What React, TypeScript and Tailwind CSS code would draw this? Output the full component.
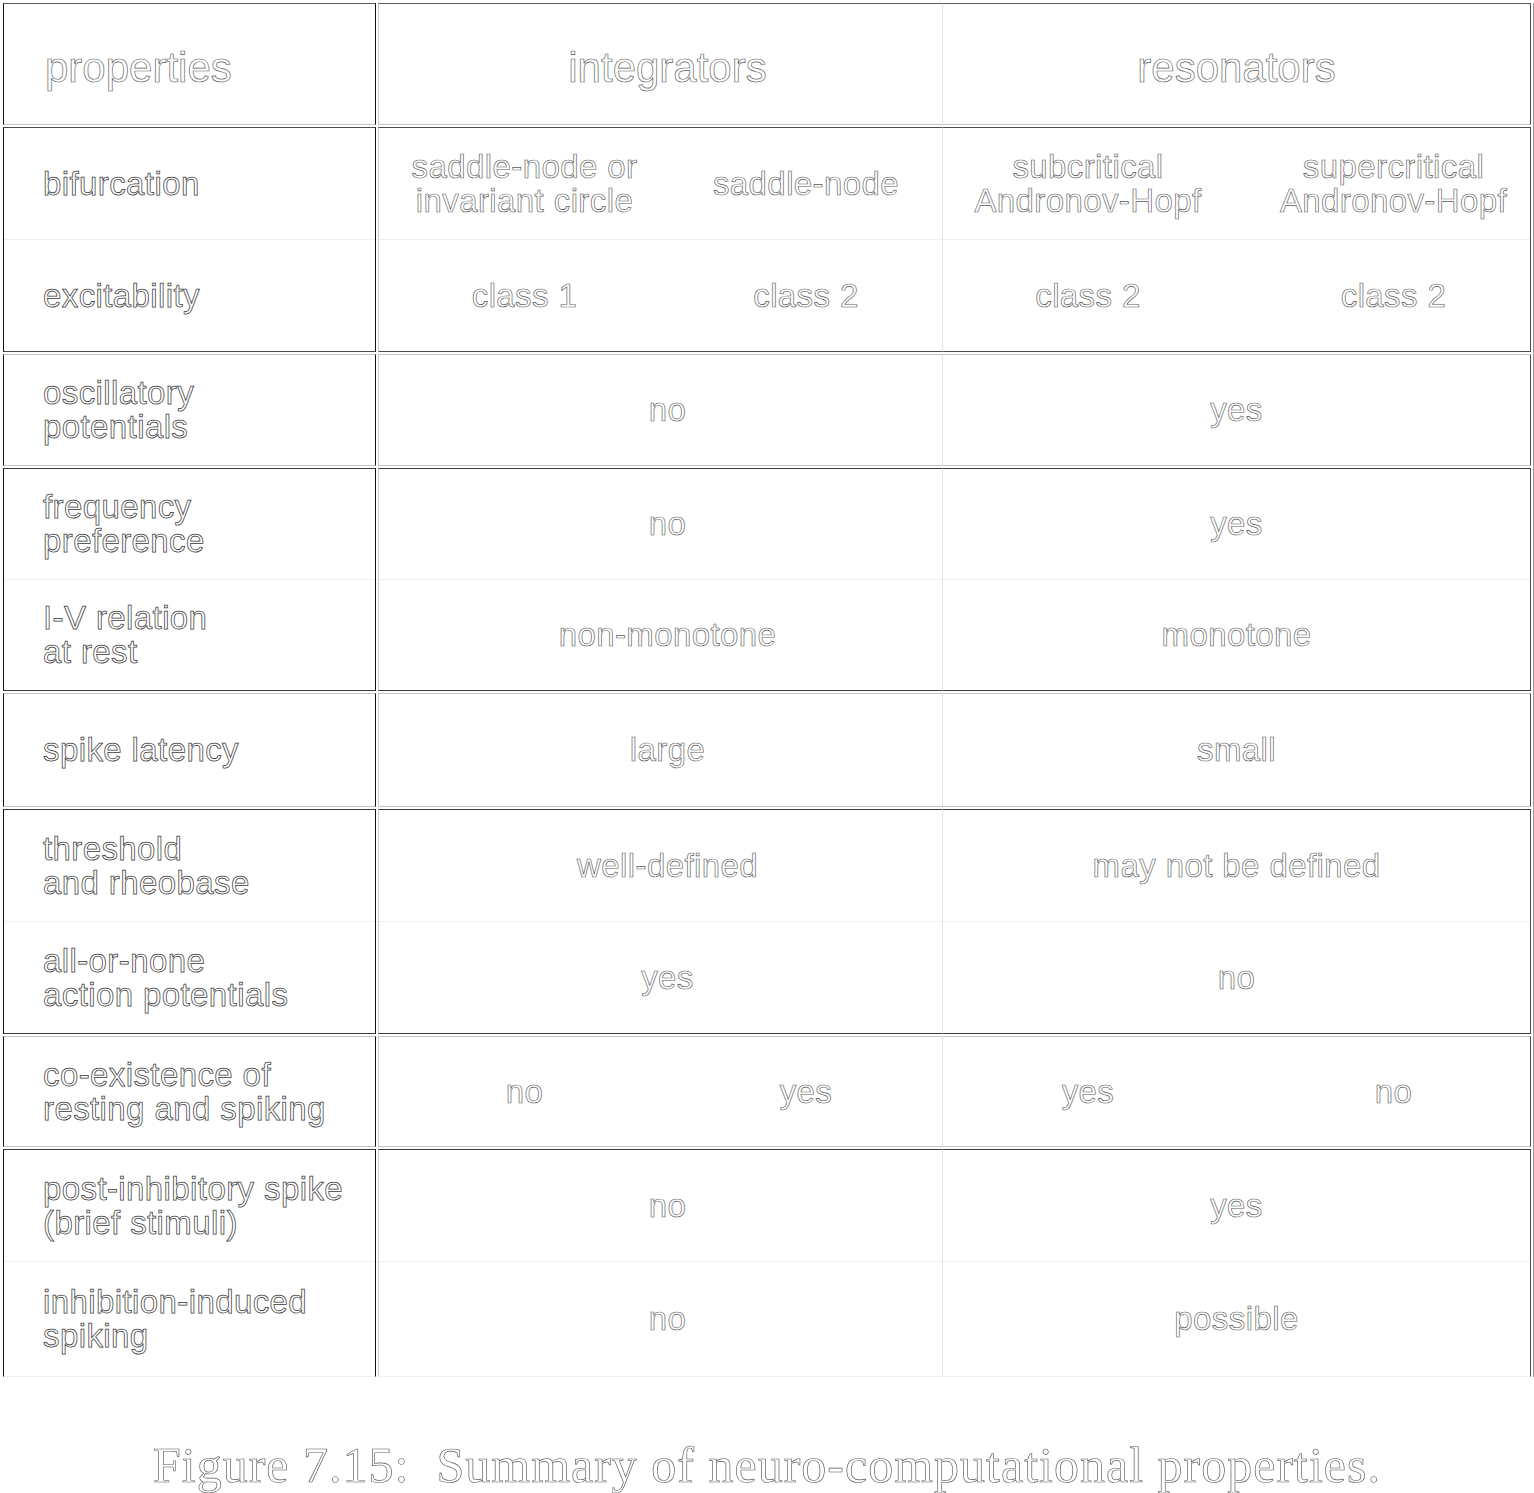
import React from "react";

const ink = "text-white [-webkit-text-stroke:0.75px_#3a3a3a]";
const inkSoft = "text-white [-webkit-text-stroke:0.65px_#5a5a5a]";

type Cell = string | [string, string];

type Group = {
  top: string;
  bottom: string;
  height: string;
  rows: { label: string; h: string; a: Cell; b: Cell }[];
};

const groups: Group[] = [
  {
    top: "border-t-[#4a4a4a]",
    bottom: "border-b-[#4a4a4a]",
    height: "h-[225px]",
    rows: [
      {
        label: "bifurcation",
        h: "h-[111px]",
        a: ["saddle-node or\ninvariant circle", "saddle-node"],
        b: ["subcritical\nAndronov-Hopf", "supercritical\nAndronov-Hopf"],
      },
      { label: "excitability", h: "h-[112px]", a: ["class 1", "class 2"], b: ["class 2", "class 2"] },
    ],
  },
  {
    top: "border-t-[#c4c4c4]",
    bottom: "border-b-[#c4c4c4]",
    height: "h-[112px]",
    rows: [{ label: "oscillatory\npotentials", h: "h-[110px]", a: "no", b: "yes" }],
  },
  {
    top: "border-t-[#3a3a3a]",
    bottom: "border-b-[#3a3a3a]",
    height: "h-[223px]",
    rows: [
      { label: "frequency\npreference", h: "h-[110px]", a: "no", b: "yes" },
      { label: "I-V relation\nat rest", h: "h-[111px]", a: "non-monotone", b: "monotone" },
    ],
  },
  {
    top: "border-t-[#c4c4c4]",
    bottom: "border-b-[#c4c4c4]",
    height: "h-[114px]",
    rows: [{ label: "spike latency", h: "h-[112px]", a: "large", b: "small" }],
  },
  {
    top: "border-t-[#3a3a3a]",
    bottom: "border-b-[#3a3a3a]",
    height: "h-[225px]",
    rows: [
      { label: "threshold\nand rheobase", h: "h-[111px]", a: "well-defined", b: "may not be defined" },
      { label: "all-or-none\naction potentials", h: "h-[112px]", a: "yes", b: "no" },
    ],
  },
  {
    top: "border-t-[#c4c4c4]",
    bottom: "border-b-[#c4c4c4]",
    height: "h-[111px]",
    rows: [{ label: "co-existence of\nresting and spiking", h: "h-[109px]", a: ["no", "yes"], b: ["yes", "no"] }],
  },
  {
    top: "border-t-[#3a3a3a]",
    bottom: "border-b-[#f0f0f0]",
    height: "h-[228px]",
    rows: [
      { label: "post-inhibitory spike\n(brief stimuli)", h: "h-[111px]", a: "no", b: "yes" },
      { label: "inhibition-induced\nspiking", h: "h-[115px]", a: "no", b: "possible" },
    ],
  },
];

function Lines({ text, cls }: { text: string; cls?: string }) {
  return (
    <div className={`leading-[34px] ${cls ?? ""}`}>
      {text.split("\n").map((t, i) => (
        <div key={i}>{t}</div>
      ))}
    </div>
  );
}

function Row({
  row,
  first,
  which,
}: {
  row: Group["rows"][number];
  first: boolean;
  which: "label" | "a" | "b";
}) {
  const divider = first ? "" : "border-t border-t-[#f0f0f0]";
  if (which === "label") {
    return (
      <div className={`${row.h} ${divider} flex items-center pl-[39px]`}>
        <Lines text={row.label} cls={ink} />
      </div>
    );
  }
  const v = which === "a" ? row.a : row.b;
  if (typeof v === "string") {
    return (
      <div className={`${row.h} ${divider} flex items-center justify-center ${which === "a" ? "pl-[14px]" : ""}`}>
        <Lines text={v} cls={`text-center ${inkSoft}`} />
      </div>
    );
  }
  return (
    <div className={`${row.h} ${divider} flex`}>
      <div className={`${which === "a" ? "w-[291px]" : "w-[290px]"} flex items-center justify-center`}>
        <Lines text={v[0]} cls={`text-center ${inkSoft}`} />
      </div>
      <div className={`flex-1 flex items-center justify-center ${which === "b" ? "pl-[24px]" : ""}`}>
        <Lines text={v[1]} cls={`text-center ${inkSoft}`} />
      </div>
    </div>
  );
}

function GroupRow({ g }: { g: Group }) {
  const edge = `border-t border-b ${g.top} ${g.bottom} ${g.height}`;
  return (
    <div className="flex mt-[2px]">
      <div className={`w-[373px] border-l border-r border-l-[#111] border-r-[#111] ${edge} flex flex-col`}>
        {g.rows.map((r, i) => (
          <Row key={i} row={r} first={i === 0} which="label" />
        ))}
      </div>
      <div className={`ml-[2px] w-[564px] border-l border-l-[#c8c8c8] ${edge} flex flex-col`}>
        {g.rows.map((r, i) => (
          <Row key={i} row={r} first={i === 0} which="a" />
        ))}
      </div>
      <div className={`w-[589px] border-l border-r border-l-[#e2e2e2] border-r-[#4a4a4a] ${edge} flex flex-col`}>
        {g.rows.map((r, i) => (
          <Row key={i} row={r} first={i === 0} which="b" />
        ))}
      </div>
    </div>
  );
}

export default function App() {
  return (
    <div className="w-[1534px] h-[1493px] bg-white overflow-hidden font-['Liberation_Sans',Arial,sans-serif] text-[33px] tracking-[0.4px]">
      <div className="pl-[3px] pt-[3px]">
        <div className="w-[1531px] border-r border-r-[#9a9a9a]">
          <div className="flex h-[122px] text-[42px] tracking-normal">
            <div className="w-[373px] border border-[#111] border-t-[#5a5a5a] border-b-[#c4c4c4] flex items-center pl-[41px] pt-[6px]">
              <span className={inkSoft}>properties</span>
            </div>
            <div className="ml-[2px] w-[564px] border-t border-b border-l border-t-[#5a5a5a] border-b-[#c4c4c4] border-l-[#c8c8c8] flex items-center justify-center pl-[14px] pt-[6px]">
              <span className={inkSoft}>integrators</span>
            </div>
            <div className="w-[589px] border-t border-b border-l border-r border-t-[#5a5a5a] border-b-[#c4c4c4] border-l-[#e2e2e2] border-r-[#4a4a4a] flex items-center justify-center pt-[6px]">
              <span className={inkSoft}>resonators</span>
            </div>
          </div>
          {groups.map((g, i) => (
            <GroupRow key={i} g={g} />
          ))}
        </div>
      </div>
      <div
        className={`mt-[63px] text-center leading-[50px] text-[50px] tracking-[1px] font-['Liberation_Serif','Times_New_Roman',serif] ${inkSoft}`}
      >
        Figure 7.15:&nbsp; Summary of neuro-computational properties.
      </div>
    </div>
  );
}
